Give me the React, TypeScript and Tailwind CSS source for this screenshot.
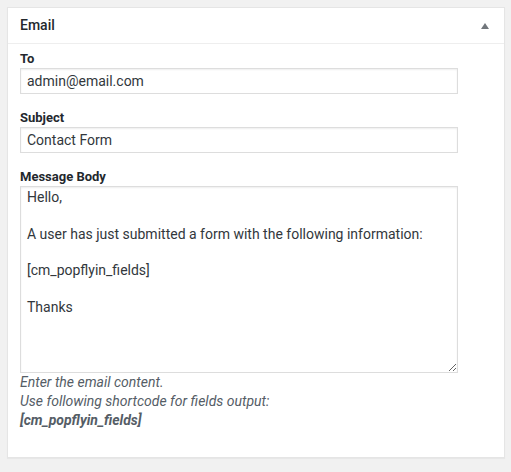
import React from "react";

const body = `Hello,

A user has just submitted a form with the following information:

[cm_popflyin_fields]

Thanks`;

function Field({ label, value }: { label: string; value: string }) {
  return (
    <div>
      <div className="text-[13px] leading-[18px] font-bold text-[#23282d]">{label}</div>
      <input
        readOnly
        value={value}
        className="block w-[438px] h-[26px] px-[6px] border border-[#ddd] shadow-[inset_0_1px_2px_rgba(0,0,0,0.07)] text-[14px] text-[#32373c] outline-none"
      />
    </div>
  );
}

export default function App() {
  return (
    <div className="min-h-[472px] bg-[#f1f1f1] pt-[7px] px-[7px] font-['Roboto',_'Liberation_Sans',_sans-serif]">
      <div className="w-[498px] border border-[#e5e5e5] bg-white shadow-[0_1px_1px_rgba(0,0,0,0.04)]">
        {/* header */}
        <div className="flex items-center justify-between h-[36px] border-b border-[#eee] pl-[12px] pr-[15px]">
          <h2 className="text-[14px] font-medium text-[#23282d]">Email</h2>
          <svg width="8" height="6" viewBox="0 0 8 6">
            <polygon points="4,0 8,6 0,6" fill="#72777c" />
          </svg>
        </div>

        <div className="px-[12px] pt-[6px] pb-[27px] flex flex-col gap-[15px]">
          <Field label="To" value="admin@email.com" />
          <Field label="Subject" value="Contact Form" />
          <div>
            <div className="text-[13px] leading-[18px] font-bold text-[#23282d]">Message Body</div>
            <textarea
              readOnly
              defaultValue={body}
              className="block w-[438px] h-[187px] px-[6px] pt-[1px] pb-[3px] border border-[#ddd] shadow-[inset_0_1px_2px_rgba(0,0,0,0.07)] text-[14px] leading-[18.3px] text-[#32373c] outline-none"
            />
            <p className="text-[14px] leading-[19px] italic text-[#555d66]">
              Enter the email content.
              <br />
              Use following shortcode for fields output:
              <br />
              <strong>[cm_popflyin_fields]</strong>
            </p>
          </div>
        </div>
      </div>
    </div>
  );
}
